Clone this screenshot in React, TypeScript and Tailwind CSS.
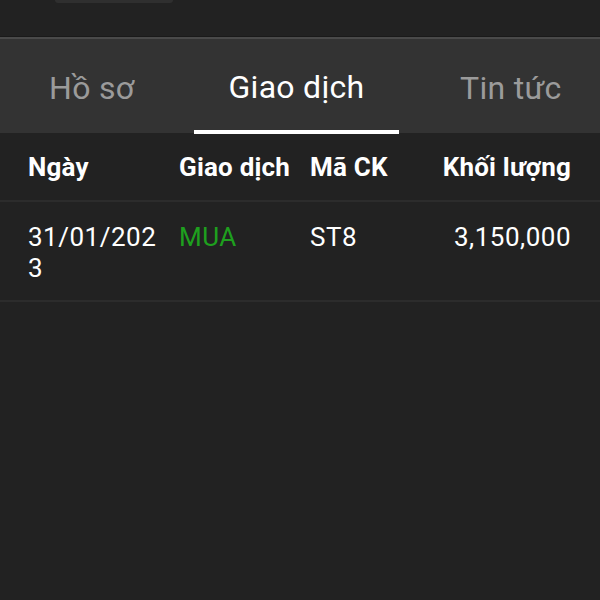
const rows = [{ date: "31/01/2023", side: "MUA", code: "ST8", volume: "3,150,000" }];

export default function App() {
  return (
    <div className="w-[600px] h-[600px] bg-[#222222] overflow-hidden" style={{ fontFamily: "Roboto, sans-serif" }}>
      {/* top bar */}
      <div className="h-[36px] bg-[#222222] px-[55px]">
        <div className="w-[118px] h-[3px] rounded-b-full bg-[#2f2f2f]" />
      </div>
      <div className="h-[1px] bg-[#1a1a1a]" />
      <div className="h-[2px] bg-[#4a4a4a]" />

      {/* tabs */}
      <div className="h-[94px] bg-[#333333] flex text-[32px] tracking-[0.3px]">
        <div className="w-[194px] flex items-center pl-[49px] pt-[4px] text-[#9b9b9b]">Hồ sơ</div>
        <div className="w-[205px] flex flex-col items-center">
          <div className="flex-1 flex items-center pt-[4px] text-white">Giao dịch</div>
          <div className="w-full h-[4px] bg-white mb-[-1px]" />
        </div>
        <div className="flex-1 flex items-center pl-[61px] pt-[4px] text-[#9b9b9b]">Tin tức</div>
      </div>

      {/* table header */}
      <div className="grid grid-cols-[151px_131px_120px_1fr] pl-[28px] pr-[29px] h-[69px] pt-[2px] items-center text-[26px] tracking-[0.2px] font-bold text-white border-b-2 border-[#2c2c2c]">
        <div>Ngày</div>
        <div>Giao dịch</div>
        <div>Mã CK</div>
        <div className="text-right">Khối lượng</div>
      </div>

      {rows.map((r) => (
        <div key={r.date} className="grid grid-cols-[151px_131px_120px_1fr] pl-[28px] pr-[29px] pt-[20px] h-[100px] text-[26px] leading-[31px] tracking-[0.5px] text-white border-b-2 border-[#2c2c2c]">
          <div className="w-[135px] break-all">{r.date}</div>
          <div className="text-[#1ea01e]">{r.side}</div>
          <div>{r.code}</div>
          <div className="text-right">{r.volume}</div>
        </div>
      ))}
    </div>
  );
}
